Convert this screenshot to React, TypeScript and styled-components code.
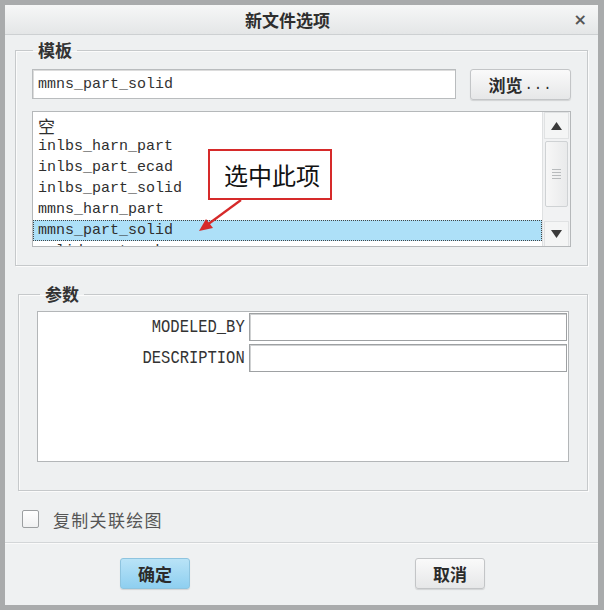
import React from "react";
import styled, { createGlobalStyle } from "styled-components";

const Global = createGlobalStyle`
  html, body { margin: 0; padding: 0; background: #ffffff; }
  * { box-sizing: border-box; }
`;

const CJK = `"Noto Sans CJK SC", "Noto Sans", sans-serif`;
const MONO = `"Liberation Mono", "DejaVu Sans Mono", monospace`;

const Frame = styled.div`
  width: 604px;
  height: 610px;
  border-style: solid;
  border-color: #a9abac;
  border-width: 5px 6px 6px 5px;
  background: #eef0f1;
  display: flex;
  flex-direction: column;
  font-family: ${CJK};
`;

const TitleBar = styled.div`
  height: 30px;
  flex: none;
  display: flex;
  align-items: center;
  justify-content: center;
  position: relative;
  background: linear-gradient(#f6f7f7, #e4e6e7);
  border-bottom: 1px solid #cdd0d2;
`;

const Title = styled.span`
  font-size: 17px;
  font-weight: 700;
  color: #2e2e2e;
  margin-right: 28px;
`;

const Close = styled.span`
  position: absolute;
  right: 11px;
  top: 5px;
  font-family: "DejaVu Sans", sans-serif;
  font-size: 16px;
  font-weight: 700;
  color: #555;
`;

const Body = styled.div`
  flex: 1;
  display: flex;
  flex-direction: column;
  padding: 5px 10px 0 10px;
`;

const Group = styled.fieldset<{ $ml: number; $pt: number; $pb: number; $px: number; $mt?: number }>`
  margin: ${(p) => p.$mt ?? 0}px 0 0 ${(p) => p.$ml - 10}px;
  border: 1px solid #c6c9cb;
  box-shadow: inset 1px 1px 0 #fbfbfb, 1px 1px 0 #fbfbfb;
  padding: ${(p) => p.$pt}px ${(p) => p.$px}px ${(p) => p.$pb}px ${(p) => p.$px}px;
  min-width: 0;
`;

const Legend = styled.legend<{ $ml: number }>`
  margin-left: ${(p) => p.$ml}px;
  padding: 0 5px;
  font-size: 17px;
  line-height: 20px;
  font-weight: 700;
  color: #333;
`;

const InputRow = styled.div`
  display: flex;
  gap: 14px;
  height: 30px;
`;

const TextInput = styled.div`
  flex: 1;
  background: #fff;
  border: 1px solid #b9bcbe;
  box-shadow: inset 1px 1px 0 #dcdcdc;
  display: flex;
  align-items: center;
  padding-left: 5px;
  font-family: ${MONO};
  font-size: 15px;
  color: #333;
`;

const Button = styled.div<{ $primary?: boolean; $w: number }>`
  width: ${(p) => p.$w}px;
  height: 31px;
  flex: none;
  border-radius: 3px;
  border: 1px solid ${(p) => (p.$primary ? "#8ec4df" : "#c3c5c7")};
  background: ${(p) =>
    p.$primary
      ? "linear-gradient(#b9e3f7, #8ecff0)"
      : "linear-gradient(#fafafa, #e6e7e8)"};
  box-shadow: 0 1px 1px rgba(0, 0, 0, 0.12);
  display: flex;
  align-items: center;
  justify-content: center;
  font-size: 17px;
  font-weight: 700;
  color: #2b2b2b;
`;

const Dots = styled.span`
  font-family: ${MONO};
  font-weight: 400;
  font-size: 14px;
  letter-spacing: 1px;
  margin-left: 2px;
`;

const ListWrap = styled.div`
  margin-top: 12px;
  height: 136px;
  position: relative;
  display: flex;
  background: #fff;
  border: 1px solid #b5b8ba;
  overflow: hidden;
`;

const Items = styled.div`
  flex: 1;
  padding-top: 3px;
  display: flex;
  flex-direction: column;
`;

const Item = styled.div<{ $sel?: boolean }>`
  height: 21px;
  flex: none;
  display: flex;
  align-items: center;
  padding-left: 5px;
  font-family: ${MONO}, ${CJK};
  font-size: 15px;
  color: #2f2f2f;
  background: ${(p) => (p.$sel ? "#ade0f8" : "transparent")};
  outline: ${(p) => (p.$sel ? "1px dotted #444" : "none")};
  outline-offset: -1px;
`;

const CjkItem = styled.span`
  font-family: ${CJK};
  font-size: 17px;
`;

const Scrollbar = styled.div`
  width: 28px;
  flex: none;
  display: flex;
  flex-direction: column;
  border-left: 1px solid #dfe1e2;
  background: #f1f2f3;
  padding: 0 1px;
`;

const ScrollBtn = styled.div<{ $h: number }>`
  height: ${(p) => p.$h}px;
  flex: none;
  display: flex;
  align-items: center;
  justify-content: center;
  background: #f4f5f5;
  border: 1px solid #e0e2e3;
`;

const Track = styled.div`
  flex: 1;
  display: flex;
  flex-direction: column;
  padding: 2px 1px 14px 1px;
`;

const Thumb = styled.div`
  height: 66px;
  border: 1px solid #cfd2d4;
  border-radius: 2px;
  background: linear-gradient(90deg, #f7f7f7, #e9eaeb);
  display: flex;
  flex-direction: column;
  align-items: center;
  justify-content: center;
  gap: 2px;
`;

const Grip = styled.div`
  width: 9px;
  height: 1px;
  background: #b8bbbd;
`;

const Callout = styled.div`
  position: absolute;
  left: 175px;
  top: 37px;
  width: 124px;
  height: 51px;
  border: 2px solid #d62a2a;
  background: #fff;
  display: flex;
  align-items: center;
  justify-content: center;
  font-family: "Noto Sans CJK SC", sans-serif;
  font-size: 24px;
  color: #111;
  padding-left: 4px;
`;

const Arrow = styled.svg`
  position: absolute;
  left: 160px;
  top: 86px;
`;

const ParamTable = styled.div`
  height: 151px;
  background: #fff;
  border: 1px solid #b3b6b8;
  padding: 1px;
  display: flex;
  flex-direction: column;
  gap: 3px;
`;

const ParamRow = styled.div`
  display: flex;
  height: 28px;
`;

const ParamLabel = styled.div`
  width: 210px;
  flex: none;
  display: flex;
  align-items: center;
  justify-content: flex-end;
  padding-right: 5px;
  font-family: ${MONO};
  font-size: 18px;
  color: #333;
  transform: scaleX(0.86);
  transform-origin: right center;
`;

const ParamField = styled.div`
  flex: 1;
  border: 1px solid #9ea1a3;
  box-shadow: inset 1px 1px 0 #cfd1d2;
  background: #fff;
`;

const CheckRow = styled.div`
  display: flex;
  align-items: center;
  gap: 14px;
  margin: 18px 0 0 7px;
  height: 20px;
`;

const CheckBox = styled.div`
  width: 17px;
  height: 18px;
  border: 1px solid #9c9fa1;
  border-radius: 2px;
  background: linear-gradient(#ffffff, #f0f1f2);
`;

const CheckLabel = styled.span`
  font-size: 17px;
  color: #555;
  letter-spacing: 1.3px;
`;

const Footer = styled.div`
  margin-top: 13px;
  height: 63px;
  flex: none;
  border-top: 1px solid #d3d6d8;
  box-shadow: inset 0 1px 0 #fafafa;
  display: flex;
  align-items: center;
  padding: 0 0 2px 115px;
  gap: 225px;
  background: #eff1f2;
`;

const Tri = ({ down }: { down?: boolean }) => (
  <svg width="11" height="8" viewBox="0 0 11 8">
    <polygon points={down ? "0,0 11,0 5.5,8" : "0,8 11,8 5.5,0"} fill="#3a3a3a" />
  </svg>
);

const items = [
  "空",
  "inlbs_harn_part",
  "inlbs_part_ecad",
  "inlbs_part_solid",
  "mmns_harn_part",
  "mmns_part_solid",
  "solid_part_mmks",
];

export default function App() {
  return (
    <>
      <Global />
      <Frame>
        <TitleBar>
          <Title>新文件选项</Title>
          <Close>×</Close>
        </TitleBar>
        <Body>
          <Group $ml={10} $pt={9} $pb={18} $px={16}>
            <Legend $ml={1}>模板</Legend>
            <InputRow>
              <TextInput>mmns_part_solid</TextInput>
              <Button $w={101}>
                浏览<Dots>...</Dots>
              </Button>
            </InputRow>
            <ListWrap>
              <Items>
                {items.map((t, i) => (
                  <Item key={t} $sel={i === 5}>
                    {i === 0 ? <CjkItem>{t}</CjkItem> : t}
                  </Item>
                ))}
              </Items>
              <Scrollbar>
                <ScrollBtn $h={27}>
                  <Tri />
                </ScrollBtn>
                <Track>
                  <Thumb>
                    <Grip />
                    <Grip />
                    <Grip />
                    <Grip />
                  </Thumb>
                </Track>
                <ScrollBtn $h={26}>
                  <Tri down />
                </ScrollBtn>
              </Scrollbar>
              <Callout>选中此项</Callout>
              <Arrow width="60" height="40" viewBox="0 0 60 40">
                <line x1="48" y1="2" x2="14" y2="27" stroke="#d62a2a" strokeWidth="2.2" />
                <polygon points="6,33 13,21 20,30" fill="#d62a2a" />
              </Arrow>
            </ListWrap>
          </Group>
          <Group $ml={13} $mt={18} $pt={7} $pb={28} $px={18}>
            <Legend $ml={3}>参数</Legend>
            <ParamTable>
              <ParamRow>
                <ParamLabel>MODELED_BY</ParamLabel>
                <ParamField />
              </ParamRow>
              <ParamRow>
                <ParamLabel>DESCRIPTION</ParamLabel>
                <ParamField />
              </ParamRow>
            </ParamTable>
          </Group>
          <CheckRow>
            <CheckBox />
            <CheckLabel>复制关联绘图</CheckLabel>
          </CheckRow>
        </Body>
        <Footer>
          <Button $primary $w={70}>确定</Button>
          <Button $w={70}>取消</Button>
        </Footer>
      </Frame>
    </>
  );
}
